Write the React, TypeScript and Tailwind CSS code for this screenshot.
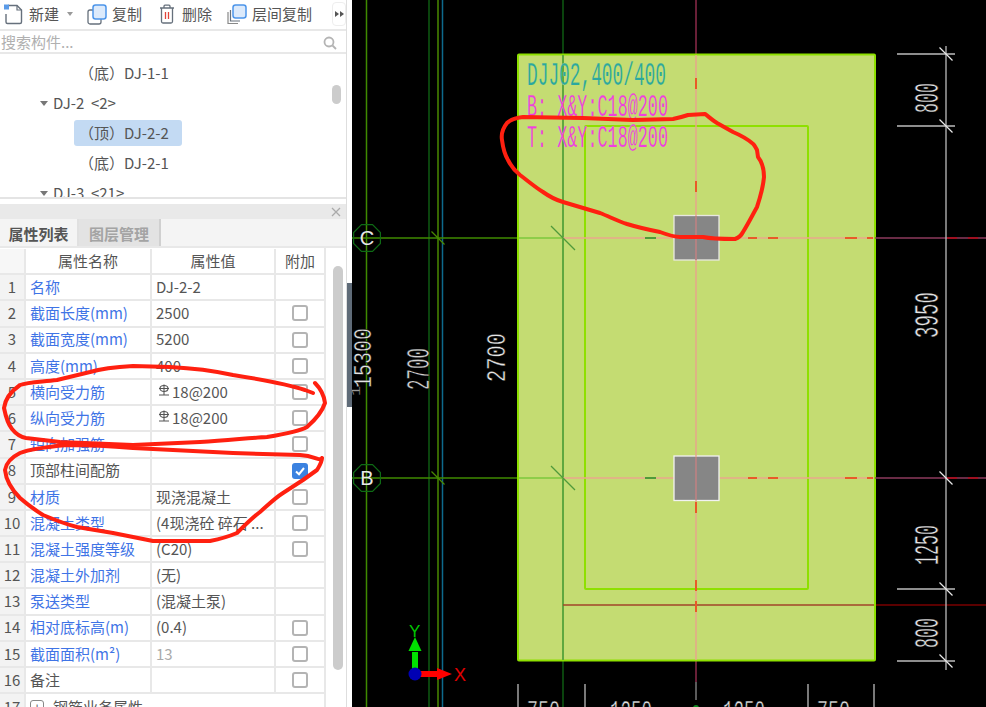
import React from "react";

const font = { fontFamily: '"Noto Sans CJK SC", "Noto Sans", sans-serif' };

const Check = ({ on }: { on?: boolean }) =>
  on ? (
    <span className="w-4 h-4 rounded-[3px] bg-[#3b82e0] flex items-center justify-center">
      <svg width="12" height="12" viewBox="0 0 12 12" fill="none" stroke="#fff" strokeWidth="2"><path d="M2 6.5 5 9.2 10 3" /></svg>
    </span>
  ) : (
    <span className="w-4 h-4 rounded-[3px] border-2 border-[#b4b4b4] bg-white" />
  );

const Rebar = () => (
  <svg width="12" height="13" viewBox="0 0 12 13" fill="none" stroke="#555" strokeWidth="1.1" className="mr-[2px] -mt-[3px] ml-[2px]">
    <ellipse cx="6" cy="4.5" rx="4" ry="3" />
    <path d="M6 0.5V11M1 11H11M1 4.5H11" />
  </svg>
);

type Row = { n: number; label: string; value?: React.ReactNode; check?: boolean; on?: boolean; dark?: boolean; gray?: boolean };

const rows: Row[] = [
  { n: 1, label: "名称", value: "DJ-2-2" },
  { n: 2, label: "截面长度(mm)", value: "2500", check: true },
  { n: 3, label: "截面宽度(mm)", value: "5200", check: true },
  { n: 4, label: "高度(mm)", value: "400", check: true },
  { n: 5, label: "横向受力筋", value: <span className="flex items-center"><Rebar />18@200</span>, check: true },
  { n: 6, label: "纵向受力筋", value: <span className="flex items-center"><Rebar />18@200</span>, check: true },
  { n: 7, label: "短向加强筋", check: true },
  { n: 8, label: "顶部柱间配筋", check: true, on: true, dark: true },
  { n: 9, label: "材质", value: "现浇混凝土", check: true },
  { n: 10, label: "混凝土类型", value: "(4现浇砼 碎石 ...", check: true },
  { n: 11, label: "混凝土强度等级", value: "(C20)", check: true },
  { n: 12, label: "混凝土外加剂", value: "(无)" },
  { n: 13, label: "泵送类型", value: "(混凝土泵)" },
  { n: 14, label: "相对底标高(m)", value: "(0.4)", check: true },
  { n: 15, label: "截面面积(m²)", value: "13", check: true, gray: true },
  { n: 16, label: "备注", check: true, dark: true },
];

const TreeRow = ({ text, sel }: { text: string; sel?: boolean }) => (
  <div className="h-[30px] flex items-center pl-[74px]">
    <span className={"h-[26px] flex items-center pl-[5px] pr-[13px] rounded-[3px] " + (sel ? "bg-[#c3daf3]" : "")}>{text}</span>
  </div>
);

const TreeGroup = ({ text }: { text: string }) => (
  <div className="h-[30px] flex items-center pl-[40px]">
    <span className="w-0 h-0 border-x-[4px] border-x-transparent border-t-[5px] border-t-[#777] mr-[5px]" />
    <span className="whitespace-pre">{text}</span>
  </div>
);

const Toolbar = () => (
  <div className="h-[31px] border-b-2 border-[#e8e8e8] flex items-center text-[15px] text-[#555] shrink-0 pb-[1px]">
    <svg width="20" height="22" viewBox="0 0 20 22" fill="none" className="ml-[3px]">
      <path d="M5 2.5H14L18.5 7V19a1.5 1.5 0 0 1-1.500 1.500H4.500A1.500 1.500 0 0 1 3 19V11" stroke="#66707c" strokeWidth="1.400" />
      <path d="M14 2.500V7H18.500" stroke="#66707c" strokeWidth="1.200" />
      <rect x="1" y="1.500" width="5" height="5" fill="#5b9be8" />
    </svg>
    <span className="ml-[6px]">新建</span>
    <span className="ml-[8px] w-0 h-0 border-x-[3px] border-x-transparent border-t-[4px] border-t-[#999]" />
    <svg width="20" height="21" viewBox="0 0 20 21" fill="none" className="ml-[14px]">
      <rect x="1" y="6" width="13" height="14" rx="2" fill="#fff" stroke="#66707c" strokeWidth="1.300" />
      <rect x="6" y="1" width="13" height="14" rx="2.500" fill="#dceafb" stroke="#4c95ea" strokeWidth="1.500" />
    </svg>
    <span className="ml-[5px]">复制</span>
    <svg width="16" height="20" viewBox="0 0 16 20" fill="none" stroke="#66707c" strokeWidth="1.300" className="ml-[17px]">
      <path d="M1 4H15M5 4V2.200A1 1 0 0 1 6 1.200H10A1 1 0 0 1 11 2.200V4" />
      <path d="M2.500 4V17.500A1.500 1.500 0 0 0 4 19H12A1.500 1.500 0 0 0 13.500 17.500V4" />
      <path d="M6.500 8V15M9.500 8V15" stroke="#e0443a" />
    </svg>
    <span className="ml-[7px]">删除</span>
    <svg width="20" height="21" viewBox="0 0 20 21" fill="none" className="ml-[15px]">
      <path d="M1 8V19.500H11" stroke="#888" strokeWidth="1.200" />
      <path d="M3.500 6V17H13" stroke="#66707c" strokeWidth="1.200" />
      <rect x="6" y="1" width="13" height="13" rx="2.500" fill="#dceafb" stroke="#4c95ea" strokeWidth="1.500" />
    </svg>
    <span className="ml-[5px]">层间复制</span>
    <span className="ml-[20px] w-[14px] h-[24px] border border-[#eee] rounded-[4px] flex items-center justify-center gap-px">
      <span className="w-0 h-0 border-y-[3px] border-y-transparent border-l-[4px] border-l-[#555]" />
      <span className="w-0 h-0 border-y-[3px] border-y-transparent border-l-[4px] border-l-[#555]" />
    </span>
  </div>
);

const PropTable = () => (
  <div className="flex-1 flex min-h-0 overflow-hidden text-[15px] text-[#555]">
    <div className="w-[326px] border-r-2 border-[#e8e8e8] shrink-0 pt-[1px]">
      <div className="h-[26.2px] flex border-b-2 border-[#e8e8e8]">
        <div className="w-[26px] border-r-2 border-[#e8e8e8] bg-[#f7f7f7]" />
        <div className="w-[126px] border-r-2 border-[#e8e8e8] flex items-center justify-center">属性名称</div>
        <div className="w-[124px] border-r-2 border-[#e8e8e8] flex items-center justify-center">属性值</div>
        <div className="flex-1 flex items-center justify-center">附加</div>
      </div>
      {rows.map((r) => (
        <div key={r.n} className="h-[26.2px] flex border-b-2 border-[#e8e8e8]">
          <div className="w-[26px] border-r-2 border-[#e8e8e8] bg-[#f3f3f3] flex items-center justify-center">{r.n}</div>
          <div className={"w-[126px] border-r-2 border-[#e8e8e8] flex items-center pl-[4px] whitespace-nowrap " + (r.dark ? "text-[#555]" : "text-[#3f74e6]")}>{r.label}</div>
          <div className={"w-[124px] border-r-2 border-[#e8e8e8] flex items-center pl-[4px] whitespace-nowrap " + (r.gray ? "text-[#aaa]" : "")}>{r.value}</div>
          <div className="flex-1 flex items-center justify-center">{r.check && <Check on={r.on} />}</div>
        </div>
      ))}
      <div className="h-[26.2px] flex">
        <div className="w-[26px] border-r-2 border-[#e8e8e8] bg-[#f3f3f3] flex items-center justify-center">17</div>
        <div className="flex items-center pl-[4px] whitespace-nowrap">
          <span className="w-[14px] h-[14px] border border-[#888] rounded-[3px] flex items-center justify-center text-[12px] leading-none mr-[9px]">+</span>
          钢筋业务属性
        </div>
      </div>
    </div>
    <div className="flex-1 pl-[7px] pt-[18px]">
      <div className="w-[10px] h-[404px] bg-[#cccccc] rounded-full" />
    </div>
  </div>
);

const LeftPanel = () => (
  <div className="w-[347px] h-full flex flex-col border-r border-[#dedede] bg-white" style={font}>
    <Toolbar />
    <div className="h-[23px] border-b-2 border-[#e8e8e8] flex items-center justify-between pl-[1px] pr-[9px] pt-[2px] text-[15px] text-[#b0b0b0] shrink-0">
      <span>搜索构件...</span>
      <svg width="14" height="14" viewBox="0 0 14 14" fill="none" stroke="#b4b4b4" strokeWidth="1.800"><circle cx="6" cy="6" r="4.500" /><path d="M9.500 9.500 13 13" /></svg>
    </div>
    <div className="h-[145px] border-b-2 border-[#e4e4e4] overflow-hidden flex text-[15px] text-[#555] shrink-0">
      <div className="flex-1 pt-[4px]">
        <TreeRow text="（底）DJ-1-1" />
        <TreeGroup text="DJ-2  <2>" />
        <TreeRow text="（顶）DJ-2-2" sel />
        <TreeRow text="（底）DJ-2-1" />
        <TreeGroup text="DJ-3  <21>" />
      </div>
      <div className="w-[14px] pt-[31px]">
        <div className="w-[9px] h-[19px] rounded-full bg-[#cccccc]" />
      </div>
    </div>
    <div className="h-[5px] shrink-0 bg-white" />
    <div className="h-[15px] bg-[#e9e9e9] flex items-center justify-end pr-[5px] shrink-0">
      <svg width="10" height="10" viewBox="0 0 10 10" stroke="#aaa" strokeWidth="1.300"><path d="M1 1 9 9M9 1 1 9" /></svg>
    </div>
    <div className="h-[29px] bg-[#f4f4f4] flex text-[15px] font-bold shrink-0 border-b-2 border-[#e8e8e8]">
      <div className="w-[79px] flex items-center justify-center pt-[3px] text-[#555] bg-[#f4f4f4] border-r-2 border-[#e0e0e0]">属性列表</div>
      <div className="w-[82px] flex items-center justify-center pt-[3px] text-[#a4a4a4] bg-[#e3e3e3] border-r-2 border-[#d0d0d0]">图层管理</div>
    </div>
    <PropTable />
  </div>
);

const Dim = ({ x, y, w, h, t, c = "#e4e4e4" }: { x: number; y: number; w: number; h: number; t: string; c?: string }) => (
  <text
    transform={`translate(${x} ${y}) rotate(-90) scale(1 ${h / 20})`}
    textLength={w}
    lengthAdjust="spacingAndGlyphs"
    fontFamily='"Liberation Mono", monospace'
    fontSize="30"
    fill={c}
    stroke="#000"
    strokeWidth="0.5"
  >
    {t}
  </text>
);

const HText = ({ x, y, w, t, c, s = 30, bg = "#c4dc72", sw = 0.25 }: { x: number; y: number; w: number; t: string; c: string; s?: number; bg?: string; sw?: number }) => (
  <text x={x} y={y} textLength={w} lengthAdjust="spacingAndGlyphs" fontFamily='"Liberation Mono", monospace' fontSize={s} fill={c} stroke={bg} strokeWidth={sw}>
    {t}
  </text>
);

const Tick = ({ x, y, r = 12, c = "#e8e8e8" }: { x: number; y: number; r?: number; c?: string }) => (
  <line x1={x - r} y1={y - r} x2={x + r} y2={y + r} stroke={c} strokeWidth="1.300" />
);

const oct = (cx: number, cy: number, r: number) =>
  Array.from({ length: 8 }, (_, i) => {
    const a = (Math.PI / 4) * i + Math.PI / 8;
    return `${(cx + r * Math.cos(a)).toFixed(1)},${(cy + r * Math.sin(a)).toFixed(1)}`;
  }).join(" ");

const Canvas = () => (
  <svg viewBox="352 0 634 707" width="634" height="707" className="block bg-black">
    {/* grid verticals left */}
    <line x1="366.500" y1="0" x2="366.500" y2="707" stroke="#3f8a00" strokeWidth="1.500" />
    <line x1="429" y1="0" x2="429" y2="707" stroke="#0e5a12" strokeWidth="1.500" />
    <line x1="438" y1="0" x2="438" y2="707" stroke="#4a8a00" strokeWidth="1.500" />
    <line x1="442.500" y1="0" x2="442.500" y2="707" stroke="#0e6a8c" strokeWidth="1.500" />
    {/* grid horizontals left */}
    <line x1="352" y1="238" x2="517" y2="238" stroke="#3f8a00" strokeWidth="1.500" />
    <line x1="352" y1="478" x2="517" y2="478" stroke="#3f8a00" strokeWidth="1.500" />
    {/* footing */}
    <line x1="563" y1="0" x2="563" y2="54" stroke="#0e5a12" strokeWidth="1.500" />
    <line x1="563" y1="661" x2="563" y2="707" stroke="#0e5a12" strokeWidth="1.500" />
    <line x1="696" y1="0" x2="696" y2="54" stroke="#8c2a4a" strokeWidth="1.500" />
    <line x1="696" y1="661" x2="696" y2="682" stroke="#8c2a4a" strokeWidth="1.500" />
    <line x1="696" y1="682" x2="696" y2="700" stroke="#7a7a7a" strokeWidth="1.500" />
    <rect x="518" y="54.500" width="357" height="606" rx="1" fill="#c4dc72" stroke="#8ee000" strokeWidth="2" />
    <rect x="585" y="126" width="223" height="463" rx="1" fill="none" stroke="#8ee000" strokeWidth="2" />
    <line x1="563" y1="55" x2="563" y2="660" stroke="#5fa83f" strokeWidth="2" />
    {/* row lines in footing */}
    {[238, 478].map((y) => (
      <g key={y}>
        <line x1="519" y1={y} x2="563" y2={y} stroke="#7cc83c" strokeWidth="1.500" />
        <line x1="563" y1={y} x2="874" y2={y} stroke="#eaa88c" strokeWidth="1.500" />
        <line x1="645" y1={y} x2="656" y2={y} stroke="#4f9a3a" strokeWidth="2" />
        <line x1="875" y1={y} x2="986" y2={y} stroke="#8c3a5c" strokeWidth="1.500" />
        <line x1="947" y1={y} x2="957" y2={y} stroke="#a01020" strokeWidth="2" />
        <line x1="968" y1={y} x2="978" y2={y} stroke="#a01020" strokeWidth="2" />
        {[[748, 757], [768, 778], [845, 857], [867, 873]].map(([a, b]) => (
          <line key={a} x1={a} y1={y} x2={b} y2={y} stroke="#e85a28" strokeWidth="2" />
        ))}
      </g>
    ))}
    <line x1="563" y1="605" x2="874" y2="605" stroke="#a2452a" strokeWidth="1.500" />
    <line x1="876" y1="605" x2="986" y2="605" stroke="#7a0000" strokeWidth="1.500" />
    {/* columns */}
    <rect x="674" y="215.500" width="45" height="44.500" fill="#868686" stroke="#e8e8e0" strokeWidth="1.300" />
    <rect x="674" y="456" width="45" height="44.500" fill="#868686" stroke="#f2f2f2" strokeWidth="1.300" />
    {/* center vertical */}
    <line x1="696" y1="55" x2="696" y2="660" stroke="#eaa48c" strokeWidth="1.500" opacity="0.95" />
    <line x1="696" y1="216" x2="696" y2="260" stroke="#a87a80" strokeWidth="1.500" />
    <line x1="696" y1="457" x2="696" y2="500" stroke="#a87a80" strokeWidth="1.500" />
    {[83, 186, 507, 585, 606].map((y) => (
      <line key={y} x1="696" y1={y - 5} x2="696" y2={y + 6} stroke="#e85a28" strokeWidth="2" />
    ))}
    {/* tick slashes */}
    {[238, 478].map((y) => (
      <g key={y}>
        <Tick x={563} y={y} r={12} c="#4f9a3a" />
        <Tick x={438} y={y} r={6.500} c="#4a8a00" />
      </g>
    ))}
    {/* axis bubbles */}
    {[{ y: 238, t: "C" }, { y: 478, t: "B" }].map((a) => (
      <g key={a.t}>
        <polygon points={oct(367, a.y, 14.500)} fill="none" stroke="#0e6a14" strokeWidth="1.200" />
        <text x="367" y={a.y + 7} textAnchor="middle" fontFamily='"Liberation Sans", sans-serif' fontSize="20" fill="#e8e8e8">{a.t}</text>
      </g>
    ))}
    {/* annotations */}
    <HText x={527} y={85} w={139} t="DJJ02,400/400" c="#2aa8a0" s={34} />
    <HText x={527} y={116} w={141} t="B: X&Y:C18@200" c="#f03ee0" s={31} />
    <HText x={527} y={147} w={141} t="T: X&Y:C18@200" c="#f03ee0" s={31} />
    {/* right dimension */}
    <line x1="946" y1="46" x2="946" y2="670" stroke="#bcbcbc" strokeWidth="1.300" />
    {[54, 126, 589, 661].map((y) => (
      <g key={y}>
        <line x1="897" y1={y} x2="955" y2={y} stroke="#bcbcbc" strokeWidth="1.300" />
        <Tick x={946} y={y} r={6.500} />
      </g>
    ))}
    <Tick x={946} y={478} r={6.500} />
    <Dim x={938} y={113} w={30} h={23} t="800" />
    <Dim x={938} y={338} w={46} h={23} t="3950" />
    <Dim x={938} y={565} w={40} h={23} t="1250" />
    <Dim x={938} y={648} w={30} h={23} t="800" />
    {/* left dims */}
    <Dim x={360} y={396} w={10} h={9} t="1" c="#999" />
    <Dim x={371} y={388} w={60} h={17} t="15300" />
    <Dim x={429} y={390} w={42} h={22} t="2700" c="#d0d0d0" />
    <Dim x={505} y={382} w={49} h={19} t="2700" />
    {/* bottom dims */}
    {[518, 585, 808, 874].map((x) => (
      <line key={x} x1={x} y1="684" x2={x} y2="707" stroke="#bcbcbc" strokeWidth="1.300" />
    ))}
    <HText x={527} y={721} w={33} t="750" c="#e0e0e0" s={30} bg="#000" sw={0.5} />
    <HText x={610} y={721} w={42} t="1250" c="#e0e0e0" s={30} bg="#000" sw={0.5} />
    <HText x={723} y={721} w={42} t="1250" c="#e0e0e0" s={30} bg="#000" sw={0.5} />
    <HText x={817} y={721} w={33} t="750" c="#e0e0e0" s={30} bg="#000" sw={0.5} />
    {/* UCS */}
    <circle cx="696" cy="708" r="3" fill="#0e8a20" />
    <rect x="412" y="652" width="6" height="18" fill="#00e000" />
    <polygon points="415,637 408.500,651 421.500,651" fill="#00e000" />
    <rect x="420" y="671" width="18" height="6" fill="#ff0000" />
    <polygon points="452,674 437,668 437,680" fill="#ff0000" />
    <circle cx="415" cy="674" r="6.500" fill="#0000b4" />
    <text x="409" y="637" fontFamily='"Liberation Sans", sans-serif' fontSize="17" fill="#00c800">Y</text>
    <text x="454" y="681" fontFamily='"Liberation Sans", sans-serif' fontSize="18" fill="#e00000">X</text>
  </svg>
);

const Scribbles = () => (
  <svg viewBox="0 0 986 707" width="986" height="707" className="absolute inset-0 pointer-events-none" fill="none" stroke="#ff2010" strokeWidth="4" strokeLinecap="round" strokeLinejoin="round">
    <path d="M313 393 L305 390 C290 385 265 380 233 375 C210 370 190 368 170 367 L133 366 C115 367 100 369 90 372 L57 380 C40 382 28 382 20 385 C10 392 5 400 4 408 C6 418 8 424 12 429 C16 434 20 437 26 438 L60 442 L133 445 L200 442 C230 440 250 438 267 437 C285 434 300 431 307 427 C315 420 322 412 325 403 C324 395 320 388 315 383" />
    <path d="M322 458 C320 462 316 456 300 455 L233 453 L133 448 C110 446 90 445 67 445 C45 447 30 449 20 453 C10 458 6 464 5 470 C6 480 12 490 20 498 C28 505 35 510 43 515 C55 520 65 524 77 527 L113 533 L153 541 L210 541 C220 539 230 536 237 533 C245 525 252 518 260 512 C268 505 275 498 283 493 L303 480 L317 470 C320 465 322 462 322 458" />
    <path d="M523 117 C515 118 510 120 507 123 C503 128 501 134 502 140 C503 148 505 155 508 160 C511 166 515 171 520 175 C528 181 535 187 543 192 C550 197 556 200 563 202 L600 213 C610 217 618 221 627 224 C640 228 650 230 660 232 C668 235 675 237 680 237 L703 237 C712 239 725 239 735 239 C738 238 741 236 743 232 C748 224 752 216 757 207 C760 198 763 188 764 177 C764 170 762 162 758 157 L757 150 C755 146 754 144 752 143 C746 138 740 135 733 132 L717 123 C712 120 708 116 705 114 L688 115 C682 117 678 118 673 119 L633 120 L583 118 Z" />
  </svg>
);

export default function App() {
  return (
    <div className="relative w-[986px] h-[707px] overflow-hidden flex bg-black">
      <div className="w-[352px] h-full flex bg-white shrink-0">
        <LeftPanel />
        <div className="flex-1 pt-[283px]">
          <div className="h-[124px] bg-[#5f6b78]" />
        </div>
      </div>
      <Canvas />
      <Scribbles />
    </div>
  );
}
